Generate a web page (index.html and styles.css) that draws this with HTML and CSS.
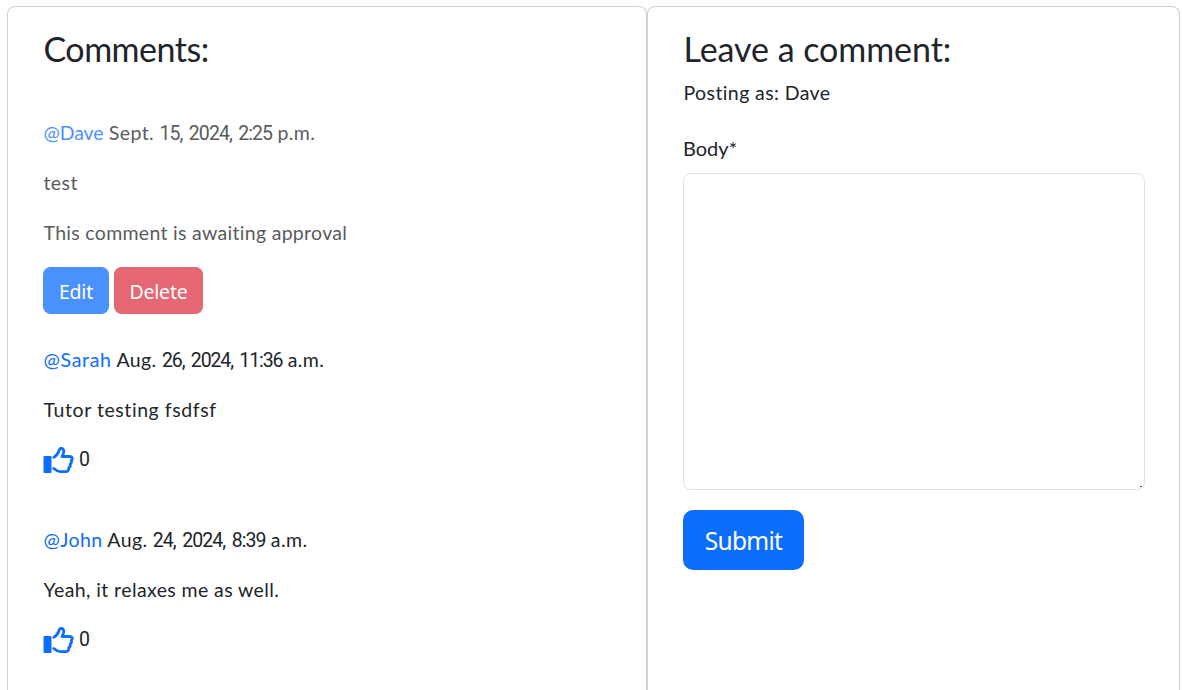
FILE: index.html
```
<!DOCTYPE html>
<html lang="en">
<head>
<meta charset="utf-8">
<title>Comments</title>
<link rel="stylesheet" href="styles.css">
</head>
<body>
<svg class="sprite" aria-hidden="true">
  <symbol id="thumb" viewBox="0 0 30 26">
    <path d="M1 9h6a1 1 0 0 1 1 1v15a1 1 0 0 1-1 1H1a1 1 0 0 1-1-1V10a1 1 0 0 1 1-1z" fill="currentColor"/>
    <path d="M10.3 10.4C13.8 8.4 15 6 15.7 3.2c.4-1.6 1.4-2.2 2.6-1.8 2 .6 2.4 2.4 1.6 4.8l-1.3 3.3h8c2.3 0 3 2.6 1.1 4 .6 1.4.2 2.8-1.1 3.6.5 1.5 0 2.8-1.3 3.5.3 2.5-1 4-3.3 4h-5c-2.9 0-4.6-1.2-6.7-3.1" fill="none" stroke="currentColor" stroke-width="2.8" stroke-linecap="round" stroke-linejoin="round"/>
  </symbol>
</svg>
<main class="row">
  <section class="card comments">
    <h3 class="title title-comments">Comments:</h3>
    <article class="comment faded">
      <p class="text"><a class="author author-dave" href="#">@Dave</a> Sept. <span class="num">15, 2024, 2:25</span> p.m.</p>
      <p class="text">test</p>
      <p class="text pending">This comment is awaiting approval</p>
      <div class="actions">
        <button class="btn btn-edit">Edit</button>
        <button class="btn btn-delete">Delete</button>
      </div>
    </article>
    <article class="comment">
      <p class="text"><a class="author author-sarah" href="#">@Sarah</a> Aug. <span class="num num-tight">26, 2024, 11:36</span> a.m.</p>
      <p class="text body-sarah">Tutor testing fsdfsf</p>
      <div class="likes"><svg class="thumb"><use href="#thumb"/></svg><span class="count">0</span></div>
    </article>
    <article class="comment">
      <p class="text"><a class="author" href="#">@John</a> Aug. <span class="num">24, 2024, 8:39</span> a.m.</p>
      <p class="text">Yeah, it relaxes me as well.</p>
      <div class="likes"><svg class="thumb"><use href="#thumb"/></svg><span class="count">0</span></div>
    </article>
  </section>
  <section class="card leave">
    <h3 class="title title-leave">Leave a comment:</h3>
    <p class="posting">Posting as: Dave</p>
    <form class="form">
      <label class="label" for="body">Body*</label>
      <textarea class="textarea" id="body"></textarea>
      <button class="submit" type="button">Submit</button>
    </form>
  </section>
</main>
</body>
</html>
```
FILE: styles.css
```
* { box-sizing: border-box; }
body {
  margin: 0;
  height: 690px;
  overflow: hidden;
  background: #fff;
  color: #212529;
  font: 19.5px/30px Lato, "Noto Sans", sans-serif;
  letter-spacing: 0.4px;
}
p, h3 { margin: 0; white-space: nowrap; text-indent: 0.5px; }
.sprite { display: none; }
.row {
  display: grid;
  grid-template-columns: 640px 533px;
  padding: 6px 0 0 7px;
  height: 690px;
}
.card {
  border: 1px solid #d0d0d0;
  border-bottom: 0;
  border-radius: 8px 8px 0 0;
  padding: 21px 34px 0 35px;
}
.title { font-size: 34px; font-weight: 400; line-height: 42px; }
.title-comments { margin-bottom: 48px; letter-spacing: -0.5px; }
.title-leave { letter-spacing: -0.05px; }
.comment { margin-bottom: 50px; }
.faded { opacity: 0.75; margin-bottom: 31px; }
.text { margin-bottom: 20px; }
.pending { letter-spacing: 0.3px; }
.body-sarah { letter-spacing: 0.57px; }
.author { color: #0d6efd; text-decoration: none; }
.author-dave { letter-spacing: -0.1px; }
.author-sarah { letter-spacing: 0.7px; }
.num { font-family: Roboto, sans-serif; line-height: 1; letter-spacing: -0.95px; word-spacing: 2.6px; }
.num-tight { letter-spacing: -1.1px; }
.actions { display: flex; gap: 5px; margin-top: -1px; }
.btn {
  height: 47px;
  border: 0;
  border-radius: 7.5px;
  padding: 3px 0 0;
  color: #fff;
  font: 19.5px/30px "Noto Sans", sans-serif;
  letter-spacing: -0.2px;
}
.btn-edit { width: 66px; background: #0d6efd; }
.btn-delete { width: 89px; background: #dc3545; }
.likes { display: flex; align-items: center; height: 30px; gap: 5px; }
.thumb { width: 31px; height: 26px; color: #0d6efd; }
.count { font-family: Roboto, sans-serif; letter-spacing: 0; }
.posting { margin-top: 8px; }
.form { display: flex; flex-direction: column; align-items: flex-start; margin-top: 25px; }
.label { font-size: 20px; letter-spacing: 0; }
.textarea {
  width: 462px;
  height: 317px;
  margin: 10px 0 20px;
  border: 1px solid #dee2e6;
  border-radius: 7.5px;
  resize: none;
  background: linear-gradient(#555, #555) right 2px bottom 2px / 2px 1px no-repeat #fff;
}
.submit {
  width: 121px;
  height: 60px;
  border: 0;
  border-radius: 10px;
  padding: 1px 0 0;
  background: #0d6efd;
  color: #fff;
  font: 24.5px/38px "Noto Sans", sans-serif;
  letter-spacing: -0.7px;
}
```
